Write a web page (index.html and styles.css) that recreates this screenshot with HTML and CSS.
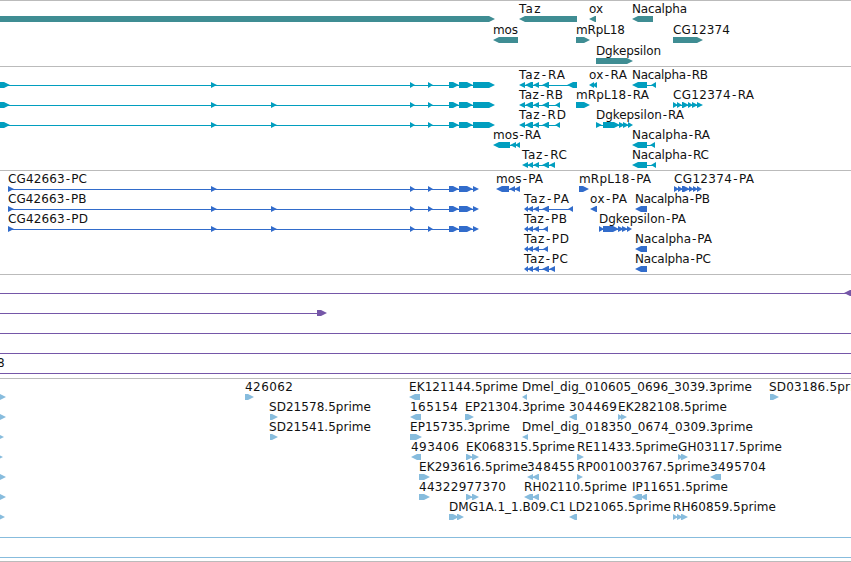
FILE: index.html
```html
<!DOCTYPE html>
<html lang="en">
  <head>
    <meta charset="UTF-8" />
    <title>Genome Browser</title>
    <link rel="stylesheet" href="styles.css">
  </head>
  <body>
    <main class="browser" id="browser"></main>
    <script src="tracks.js"></script>
  </body>
</html>
```
FILE: styles.css
```css
body {
  margin: 0;
  background-color: #fff;
  overflow: hidden;
}

.browser {
  display: flex;
  flex-direction: column;
  height: 562px;
  overflow: hidden;
}

.track {
  flex: none;
  box-sizing: border-box;
  border-top: 1px solid #bbb;
  overflow: hidden;
}

.track svg {
  display: block;
  width: 851px;
  height: 100%;
}

.genes {
  height: 66px;
  color: #3f8d93;
}

.transcripts {
  height: 104px;
  color: #019ebf;
}

.proteins {
  height: 104px;
  color: #326ccb;
}

.insertions {
  height: 104px;
  color: #7557a8;
}

.ests {
  height: 183px;
  color: #87bcdd;
}

.end {
  height: 1px;
}

.box,
.line {
  fill: currentColor;
}

.line {
  shape-rendering: crispEdges;
}

.label {
  font-family: "DejaVu Sans", sans-serif;
  font-size: 12px;
  fill: #111;
}
```
FILE: tracks.js
```js
// feature: [row, strand, boxes, label, label start, label end]
const exons = [[410, 415], [428, 433], [449, 459], [459, 473]];

const tracks = [
  {
    name: "genes",
    pitch: 21,
    features: [
      [0, 1, [[-10, 495]]],
      [0, -1, [[519, 577]], "Taz", 519, 540.5],
      [0, -1, [[589, 596]], "ox", 589, 603],
      [0, -1, [[632, 653]], "Nacalpha", 632, 687],
      [1, -1, [[493, 518]], "mos", 493, 518],
      [1, 1, [[576, 590]], "mRpL18", 576, 625],
      [1, 1, [[673, 703]], "CG12374", 673, 730],
      [2, 1, [[596, 633]], "Dgkepsilon", 596, 661],
    ],
  },
  {
    name: "transcripts",
    pitch: 20,
    features: [
      [0, 1, [[-10, 10], [211, 217], ...exons, [473, 495]]],
      [1, 1, [[-10, 10], [211, 217], [271, 277], ...exons, [473, 495]]],
      [2, 1, [[-10, 10], [211, 217], [271, 277], ...exons, [473, 495]]],
      [0, -1, [[519, 525], [525, 533], [533, 539], [542, 549], [567, 577]], "Taz-RA", 519, 565],
      [0, -1, [[589, 594], [592, 597]], "ox-RA", 589, 627],
      [0, -1, [[632, 647], [651, 656]], "Nacalpha-RB", 632, 708],
      [1, -1, [[519, 525], [525, 533], [533, 539], [542, 549], [555, 560]], "Taz-RB", 519, 563],
      [1, 1, [[576, 590]], "mRpL18-RA", 576, 649],
      [1, 1, [[673, 678], [677, 682], [682, 689], [688, 693], [692, 698], [697, 703]], "CG12374-RA", 673, 754],
      [2, -1, [[519, 525], [525, 533], [533, 539], [542, 549], [555, 560]], "Taz-RD", 519, 566],
      [2, 1, [[596, 602], [603, 620], [619, 625], [623, 629], [628, 633]], "Dgkepsilon-RA", 596, 684],
      [3, -1, [[493, 510], [510, 516], [515, 520]], "mos-RA", 493, 541],
      [3, -1, [[632, 647], [650, 655]], "Nacalpha-RA", 632, 710],
      [4, -1, [[522, 528], [527, 533], [533, 539], [542, 549], [549, 555]], "Taz-RC", 522, 567],
      [4, -1, [[632, 647], [651, 656]], "Nacalpha-RC", 632, 709],
    ],
  },
  {
    name: "proteins",
    pitch: 20,
    features: [
      [0, 1, [[8, 14], [211, 217], ...exons, [473, 479]], "CG42663-PC", 8, 87],
      [1, 1, [[8, 14], [211, 217], [271, 277], ...exons, [473, 479]], "CG42663-PB", 8, 86.5],
      [2, 1, [[8, 14], [211, 217], [271, 277], ...exons, [473, 479]], "CG42663-PD", 8, 88],
      [0, -1, [[496, 509], [509, 515], [514, 520]], "mos-PA", 496, 543],
      [0, 1, [[579, 589]], "mRpL18-PA", 579, 651],
      [0, 1, [[674, 679], [678, 683], [682, 690], [689, 694], [693, 698], [697, 702]], "CG12374-PA", 674, 754],
      [1, -1, [[524, 528], [527, 533], [533, 539], [542, 549], [568, 573]], "Taz-PA", 524, 569],
      [1, -1, [[590, 597]], "ox-PA", 590, 627],
      [1, -1, [[635, 647]], "Nacalpha-PB", 635, 710],
      [2, -1, [[524, 528], [527, 533], [533, 539], [543, 548]], "Taz-PB", 524, 567],
      [2, 1, [[599, 604], [603, 619], [618, 624], [622, 628], [627, 632]], "Dgkepsilon-PA", 599, 686],
      [3, -1, [[524, 528], [527, 533], [533, 539], [543, 548]], "Taz-PD", 524, 569],
      [3, -1, [[635, 647]], "Nacalpha-PA", 635, 712],
      [4, -1, [[524, 528], [527, 533], [533, 539], [542, 549], [549, 555]], "Taz-PC", 524, 568],
      [4, -1, [[635, 647]], "Nacalpha-PC", 635, 711],
    ],
  },
  {
    name: "insertions",
    pitch: 20,
    features: [
      [0, -1, [[-10, -4], [844, 860]]],
      [1, 1, [[-10, -4], [317, 327]]],
      [2, 1, [[-10, -4], [860, 870]]],
      [3, 1, [[-10, -4], [860, 870]]],
      [4, 1, [[-10, -4], [860, 870]], "8", -3, 5],
    ],
  },
  {
    name: "ests",
    pitch: 20,
    features: [
      [0, 1, [[-5, 6]]],
      [1, 1, [[-5, 6]]],
      [2, 1, [[-5, 4]]],
      [3, 1, [[-5, 3]]],
      [4, 1, [[-5, 6]]],
      [5, 1, [[-5, 6]]],
      [6, 1, [[-5, 5]]],
      [7, 1, [[-10, -4], [860, 870]]],
      [8, 1, [[-10, -4], [860, 870]]],
      [0, 1, [[245, 254]], "426062", 245, 293],
      [0, -1, [[409, 420]], "EK121144.5prime", 409, 518],
      [0, -1, [[522, 527]], "Dmel_dig_010605_0696_3039.3prime", 522, 752],
      [0, 1, [[770, 779]], "SD03186.5prime", 769, 873],
      [1, 1, [[270, 278]], "SD21578.5prime", 269, 371],
      [1, -1, [[410, 421]], "165154", 410, 458],
      [1, 1, [[465, 474]], "EP21304.3prime", 465, 565],
      [1, -1, [[569, 577]], "304469", 569, 617],
      [1, 1, [[618, 623], [621, 627]], "EK282108.5prime", 618, 727],
      [2, 1, [[270, 278]], "SD21541.5prime", 269, 371],
      [2, 1, [[410, 422]], "EP15735.3prime", 410, 510],
      [2, -1, [[522, 528]], "Dmel_dig_018350_0674_0309.3prime", 522, 753],
      [3, -1, [[411, 421]], "493406", 411, 459],
      [3, 1, [[466, 473], [472, 479]], "EK068315.5prime", 466, 575],
      [3, 1, [[577, 584]], "RE11433.5prime", 577, 678],
      [3, 1, [[678, 683], [681, 688]], "GH03117.5prime", 678, 782],
      [4, 1, [[419, 430]], "EK293616.5prime", 419, 528],
      [4, -1, [[527, 533], [532, 539]], "348455", 527, 575],
      [4, 1, [[577, 583]], "RP001003767.5prime", 577, 710],
      [4, -1, [[710, 721]], "3495704", 710, 766],
      [5, 1, [[419, 430]], "44322977370", 419, 506],
      [5, 1, [[466, 473], [472, 479]]],
      [5, -1, [[524, 533], [532, 539]], "RH02110.5prime", 524, 627],
      [5, -1, [[632, 642], [640, 647]], "IP11651.5prime", 632, 728],
      [6, 1, [[449, 459], [457, 464]], "DMG1A.1_1.B09.C1", 449, 566],
      [6, -1, [[569, 577]], "LD21065.5prime", 569, 671],
      [6, 1, [[673, 678], [677, 683], [681, 688]], "RH60859.5prime", 673, 776],
    ],
  },
  { name: "end", pitch: 20, features: [] },
];

const SVG = "http://www.w3.org/2000/svg";
const HEAD = 6;

const add = (parent, tag, attrs) => {
  const el = document.createElementNS(SVG, tag);
  for (const key in attrs) {
    el.setAttribute(key, attrs[key]);
  }
  parent.appendChild(el);
  return el;
};

const arrow = (start, end, strand, y) => {
  const head = Math.min(HEAD, end - start);
  if (strand > 0) {
    return `M${start} ${y}H${end - head}L${end} ${y + 3}L${end - head} ${y + 6}H${start}Z`;
  }
  return `M${end} ${y}H${start + head}L${start} ${y + 3}L${start + head} ${y + 6}H${end}Z`;
};

const addLabel = (svg, label, x, y, width) => {
  const text = add(svg, "text", { class: "label", x, y, textLength: width });
  text.textContent = label;

  // a little air on both sides of the hyphen
  const dash = label.indexOf("-");
  if (dash > 0) {
    const dx = Array(dash).fill(0).concat([1, 1]);
    text.setAttribute("dx", dx.join(" "));
  }
};

tracks.forEach((track) => {
  const section = document.createElement("section");
  section.className = "track " + track.name;
  const svg = add(section, "svg", {});

  track.features.forEach(([row, strand, boxes, label, from, to]) => {
    const y = 15 + row * track.pitch;
    const first = boxes[0][0];
    const last = boxes[boxes.length - 1][1];

    if (boxes.length > 1) {
      add(svg, "rect", { class: "line", x: first + 2, y: y + 3, width: last - first - 4, height: 1 });
    }
    boxes.forEach(([start, end]) => {
      add(svg, "path", { class: "box", d: arrow(start, end, strand, y) });
    });
    if (label) {
      addLabel(svg, label, from, y - 3, to - from);
    }
  });

  document.getElementById("browser").appendChild(section);
});
```
